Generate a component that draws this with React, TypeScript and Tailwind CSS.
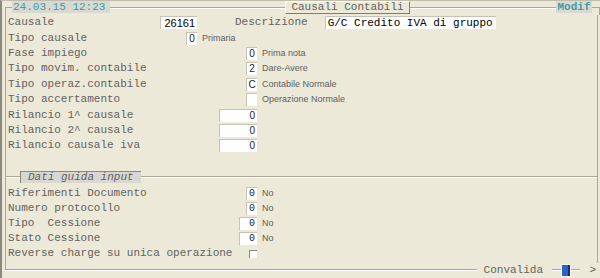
import React from 'react';

const mono = "font-['Liberation_Mono','Courier_New',monospace]";
const sans = "font-['Liberation_Sans',Arial,sans-serif]";
const label = `${mono} text-[11px] leading-none text-[#626260] whitespace-pre`;
const hint = `${sans} text-[9px] leading-none text-[#60605c]`;

// etched groupbox line
const HLine = ({ className = '' }: { className?: string }) => (
  <div className={`h-[2px] border-t border-b border-t-[#aca899] border-b-white ${className}`} />
);

interface BoxProps {
  className: string;
  children?: React.ReactNode;
}

const Field = ({ className, children }: BoxProps) => (
  <div className={`flex items-center bg-white border-t border-l border-[#c6c3b6] ${className}`}>{children}</div>
);

interface RowProps {
  text: string;
  cell: string;
  box: React.ReactNode;
  note?: string;
  h?: string;
}

const Row = ({ text, cell, box, note, h = 'h-[15.4px]' }: RowProps) => (
  <div className={`flex items-center ${h}`}>
    <div className={`flex items-center justify-between ${cell}`}>
      <span className={label}>{text}</span>
      {box}
    </div>
    {note && <span className={`ml-[5px] ${hint}`}>{note}</span>}
  </div>
);

const Small = ({ v, font = sans }: { v?: string; font?: string }) => (
  <Field className="w-[11px] h-[13px] justify-center">
    <span className={`${font} text-[10px] leading-none text-[#222]`}>{v}</span>
  </Field>
);

const Wide = ({ v, w, font = sans }: { v: string; w: string; font?: string }) => (
  <Field className={`${w} h-[13px] justify-end pr-[2px]`}>
    <span className={`${font} text-[10px] leading-none text-[#222]`}>{v}</span>
  </Field>
);

export default function App() {
  return (
    <div className="w-[600px] h-[278px] overflow-hidden bg-[#ECE9D8] border-t border-t-[#c2beae] border-l-2 border-l-[#8c8a7e]">
      {/* title bar of the group */}
      <div className="flex h-[14px] items-start">
        <div className="ml-[3px] mt-[6px] w-[7px] h-[8px] border-l border-t border-[#aca899]" />
        <div className={`w-[98px] h-[12px] bg-[#d9d9d4] pl-px flex items-center ${mono} text-[11px] text-[#3aa0a0]`}>
          24.03.15 12:23
        </div>
        <HLine className="mt-[6px] w-[175px]" />
        <div className={`w-[125px] h-[13px] border border-t-white border-l-white border-r-[#7c7b74] border-b-[#7c7b74] flex items-center justify-center ${mono} text-[11px] text-[#626260]`}>
          Causali Contabili
        </div>
        <HLine className="mt-[6px] flex-1" />
        <div className={`w-[36px] h-[12px] bg-[#d9d9d4] flex items-center justify-center ${mono} text-[11px] font-bold text-[#3aa0a0]`}>
          Modif
        </div>
        <div className="mt-[6px] w-[8px] h-[8px] border-t border-r border-[#aca899]" />
      </div>

      {/* body */}
      <div className="ml-[3px] w-[593px] h-[248px] border-l border-r border-[#aca899] pl-[2px] flex flex-col">
        <div className="flex h-[15.4px] items-center">
          <div className="flex w-[189px] items-center justify-between">
            <span className={label}>Causale</span>
            <Field className="w-[37px] h-[13px] justify-end pr-[2px]">
              <span className={`${sans} text-[11px] leading-none text-black`}>26161</span>
            </Field>
          </div>
          <span className={`ml-[38px] ${label}`}>Descrizione</span>
          <Field className="ml-[17px] w-[171px] h-[13px] pl-[2px]">
            <span className={`${mono} text-[11px] leading-none text-black`}>G/C Credito IVA di gruppo</span>
          </Field>
        </div>
        <Row text="Tipo causale" cell="w-[189px]" box={<Small v="0" />} note="Primaria" />
        <Row text="Fase impiego" cell="w-[249px]" box={<Small v="0" />} note="Prima nota" />
        <Row text="Tipo movim. contabile" cell="w-[249px]" box={<Small v="2" />} note="Dare-Avere" />
        <Row text="Tipo operaz.contabile" cell="w-[249px]" box={<Small v="C" />} note="Contabile Normale" />
        <Row text="Tipo accertamento" cell="w-[249px]" box={<Small />} note="Operazione Normale" />
        <Row text="Rilancio 1^ causale" cell="w-[249px]" box={<Wide v="0" w="w-[38px]" />} />
        <Row text="Rilancio 2^ causale" cell="w-[249px]" box={<Wide v="0" w="w-[38px]" />} />
        <Row text="Rilancio causale iva" cell="w-[249px]" box={<Wide v="0" w="w-[38px]" />} />

        {/* Dati guida input */}
        <div className="-ml-[2px] mt-[17.4px] flex h-[12px] items-center">
          <HLine className="w-[14px]" />
          <div className={`w-[121px] h-[12px] bg-[#d8d7d2] border-t border-l border-[#8a897f] pl-[7px] flex items-center ${mono} italic text-[11px] leading-none text-[#626260]`}>
            Dati guida input
          </div>
          <HLine className="flex-1" />
        </div>

        <div className="mt-[3px] flex flex-col">
          <Row h="h-[15.1px]" text="Riferimenti Documento" cell="w-[249px]" box={<Small v="0" font={mono} />} note="No" />
          <Row h="h-[15.1px]" text="Numero protocollo" cell="w-[249px]" box={<Small v="0" font={mono} />} note="No" />
          <Row h="h-[15.1px]" text="Tipo  Cessione" cell="w-[249px]" box={<Wide v="0" w="w-[18px]" font={mono} />} note="No" />
          <Row h="h-[15.1px]" text="Stato Cessione" cell="w-[249px]" box={<Wide v="0" w="w-[18px]" font={mono} />} note="No" />
          <Row
            h="h-[15.1px]"
            text="Reverse charge su unica operazione"
            cell="w-[249px]"
            box={<div className="w-[8px] h-[8px] bg-white border-t border-l border-[#8a897f]" />}
          />
        </div>
      </div>

      {/* bottom line */}
      <div className="ml-[3px] w-[593px] h-[14px] flex items-center">
        <div className="self-start h-[7px] border-l border-[#aca899]" />
        <HLine className="flex-1" />
        <span className={`ml-[7px] mr-[9px] ${label}`}>Convalida</span>
        <HLine className="w-[9px]" />
        <div className="w-[10px] h-[13px] border border-[#f6f5ea] bg-[#2f62c8] flex justify-end">
          <div className="w-[2px] h-full bg-[#1c2f6c]" />
        </div>
        <HLine className="w-[9px]" />
        <div className={`w-[18px] text-right pr-[2px] ${label}`}>&gt;</div>
      </div>
    </div>
  );
}
